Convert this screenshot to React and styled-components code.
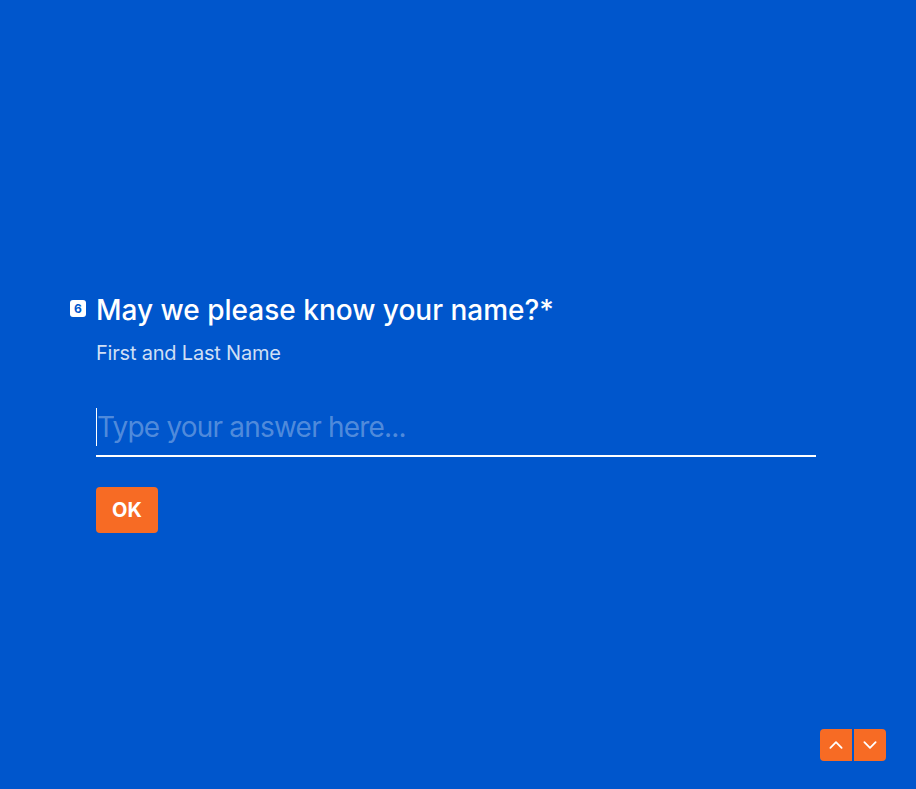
import React from 'react'
import styled, { createGlobalStyle } from 'styled-components'

const GlobalStyle = createGlobalStyle`
  html, body {
    margin: 0;
    padding: 0;
    background: #0056cc;
  }
  body {
    font-family: Inter, "Noto Sans", sans-serif;
  }
  * { box-sizing: border-box; }
`

const Page = styled.div`
  width: 916px;
  height: 789px;
  background: #0056cc;
  position: relative;
  overflow: hidden;
`

const Question = styled.section`
  padding: 292px 0 0 70px;
  display: flex;
  align-items: flex-start;
  gap: 10px;
`

const Badge = styled.div`
  width: 16px;
  height: 17px;
  margin-top: 8px;
  border-radius: 3px;
  background: #ffffff;
  color: #0056cc;
  font-size: 12px;
  font-weight: 700;
  display: flex;
  align-items: center;
  justify-content: center;
`

const Body = styled.div`
  width: 720px;
  display: flex;
  flex-direction: column;
`

const Title = styled.h1`
  margin: 0;
  font-size: 28px;
  font-weight: 500;
  line-height: 36px;
  color: #ffffff;
`

const Hint = styled.p`
  margin: 12px 0 0;
  font-size: 20px;
  line-height: 26px;
  letter-spacing: -0.2px;
  color: rgba(255, 255, 255, 0.82);
`

const Field = styled.div`
  margin-top: 41px;
  border-bottom: 2px solid #ffffff;
  padding-bottom: 8px;
  display: flex;
  align-items: center;
`

const Caret = styled.span`
  width: 1px;
  height: 38px;
  background: #ffffff;
`

const Input = styled.input`
  flex: 1;
  border: none;
  outline: none;
  background: transparent;
  padding: 0;
  font-family: inherit;
  font-size: 28px;
  line-height: 40px;
  letter-spacing: -0.8px;
  color: #ffffff;
  &::placeholder {
    color: rgba(255, 255, 255, 0.33);
  }
`

const OkButton = styled.button`
  margin-top: 30px;
  width: 62px;
  height: 46px;
  border: none;
  border-radius: 4px;
  background: #f76b24;
  color: #ffffff;
  font-family: inherit;
  font-size: 20px;
  font-weight: 700;
  cursor: pointer;
`

const Nav = styled.div`
  position: absolute;
  right: 30px;
  bottom: 28px;
  display: flex;
  gap: 2px;
`

const NavButton = styled.button`
  width: 32px;
  height: 32px;
  border: none;
  padding: 0;
  background: #f76b24;
  display: flex;
  align-items: center;
  justify-content: center;
  border-radius: ${p => (p.$first ? '4px 0 0 4px' : '0 4px 4px 0')};
  cursor: pointer;
`

const Chevron = ({ up }) => (
  <svg width="18" height="18" viewBox="0 0 16 16" fill="none">
    <path
      d={up ? 'M3 10.5 L8 5.5 L13 10.5' : 'M3 5.5 L8 10.5 L13 5.5'}
      stroke="#ffffff"
      strokeWidth="1.6"
      strokeLinecap="round"
      strokeLinejoin="round"
    />
  </svg>
)

const App = () => {
  return (
    <Page>
      <GlobalStyle />
      <Question>
        <Badge>6</Badge>
        <Body>
          <Title>May we please know your name?*</Title>
          <Hint>First and Last Name</Hint>
          <Field>
            <Caret />
            <Input type="text" placeholder="Type your answer here..." />
          </Field>
          <div>
            <OkButton>OK</OkButton>
          </div>
        </Body>
      </Question>
      <Nav>
        <NavButton $first><Chevron up /></NavButton>
        <NavButton><Chevron /></NavButton>
      </Nav>
    </Page>
  )
}

export default App
